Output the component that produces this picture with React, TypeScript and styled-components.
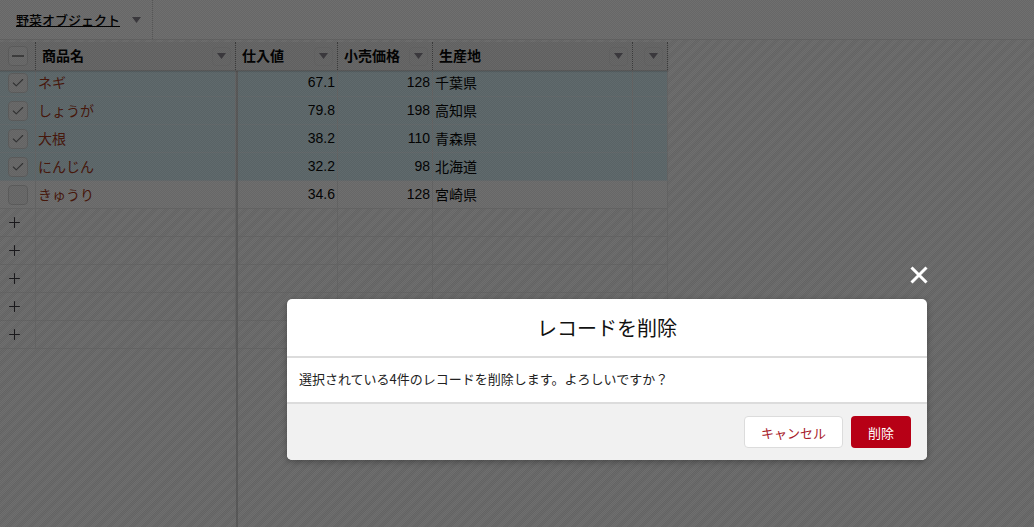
import styled, { createGlobalStyle } from 'styled-components';
import { Check, Plus } from 'lucide-react';

const rows = [
  { name: 'ネギ', cost: '67.1', price: '128', origin: '千葉県', selected: true },
  { name: 'しょうが', cost: '79.8', price: '198', origin: '高知県', selected: true },
  { name: '大根', cost: '38.2', price: '110', origin: '青森県', selected: true },
  { name: 'にんじん', cost: '32.2', price: '98', origin: '北海道', selected: true },
  { name: 'きゅうり', cost: '34.6', price: '128', origin: '宮崎県', selected: false },
];

const emptyRows = [0, 1, 2, 3, 4];

function Arrow() {
  return (
    <svg width="9" height="6" viewBox="0 0 9 6">
      <path d="M0 0h9L4.5 6z" fill="#8a8690" />
    </svg>
  );
}

function HeaderMenu() {
  return (
    <MenuButton>
      <Arrow />
    </MenuButton>
  );
}

export default function App() {
  return (
    <>
      <GlobalStyle />
      <Page>
        <TabBar>
          <Tab>
            <TabLabel>野菜オブジェクト</TabLabel>
            <Arrow />
          </Tab>
        </TabBar>

        <Grid>
          <FrozenPane>
            <HeaderRow $columns="36px 200px">
              <HeaderCell $center>
                <CheckBox>
                  <Dash />
                </CheckBox>
              </HeaderCell>
              <HeaderCell>
                <HeaderLabel>商品名</HeaderLabel>
                <HeaderMenu />
              </HeaderCell>
            </HeaderRow>
            {rows.map((row) => (
              <Row key={row.name} $columns="36px 200px" $selected={row.selected} $filled>
                <Cell $center>
                  <CheckBox>{row.selected && <Check size={14} color="#77787a" strokeWidth={2} />}</CheckBox>
                </Cell>
                <NameCell>{row.name}</NameCell>
              </Row>
            ))}
            {emptyRows.map((n) => (
              <Row key={n} $columns="36px 200px">
                <AddCell>
                  <Plus size={17} color="#3f3c42" strokeWidth={1.5} />
                </AddCell>
                <Cell />
              </Row>
            ))}
          </FrozenPane>

          <ScrollPane>
            <HeaderRow $columns="102px 95px 200px 35px">
              <HeaderCell>
                <HeaderLabel>仕入値</HeaderLabel>
                <HeaderMenu />
              </HeaderCell>
              <HeaderCell>
                <HeaderLabel>小売価格</HeaderLabel>
                <HeaderMenu />
              </HeaderCell>
              <HeaderCell>
                <HeaderLabel>生産地</HeaderLabel>
                <HeaderMenu />
              </HeaderCell>
              <HeaderCell>
                <HeaderMenu />
              </HeaderCell>
            </HeaderRow>
            {rows.map((row) => (
              <Row key={row.name} $columns="102px 95px 200px 35px" $selected={row.selected} $filled>
                <NumberCell>{row.cost}</NumberCell>
                <NumberCell>{row.price}</NumberCell>
                <OriginCell>{row.origin}</OriginCell>
                <Cell />
              </Row>
            ))}
            {emptyRows.map((n) => (
              <Row key={n} $columns="102px 95px 200px 35px">
                <Cell />
                <Cell />
                <Cell />
                <Cell />
              </Row>
            ))}
          </ScrollPane>
        </Grid>

        <Overlay>
          <DialogWrap>
            <CloseButton>
              <svg width="18" height="18" viewBox="0 0 18 18">
                <path d="M1.5 1.5l15 15M16.5 1.5l-15 15" stroke="#fff" strokeWidth="3" />
              </svg>
            </CloseButton>
            <Dialog>
              <DialogTitle>レコードを削除</DialogTitle>
              <DialogBody>選択されている4件のレコードを削除します。よろしいですか？</DialogBody>
              <DialogFooter>
                <CancelButton>キャンセル</CancelButton>
                <DeleteButton>削除</DeleteButton>
              </DialogFooter>
            </Dialog>
          </DialogWrap>
        </Overlay>
      </Page>
    </>
  );
}

const fontStack = `"Noto Sans CJK JP", "Liberation Sans", sans-serif`;

const GlobalStyle = createGlobalStyle`
  html, body {
    margin: 0;
    height: 100%;
    overflow: hidden;
  }
  body {
    font-family: "Liberation Sans", ${fontStack};
    font-size: 14px;
    color: #080808;
  }
`;

const Page = styled.div`
  position: relative;
  height: 100vh;
  display: flex;
  flex-direction: column;
  background: repeating-linear-gradient(-45deg, #fff 0 4px, #f5f5f5 4px 8px);
`;

const TabBar = styled.div`
  height: 39px;
  flex: none;
  display: flex;
  background: #fff;
  border-bottom: 1px solid #e6e6e6;
  margin-bottom: 2px;
`;

const Tab = styled.div`
  width: 153px;
  box-sizing: border-box;
  display: flex;
  align-items: center;
  gap: 12px;
  padding-left: 16px;
  border-right: 1px dotted #c8c8c8;
`;

const TabLabel = styled.span`
  font-family: ${fontStack};
  font-size: 13px;
  font-weight: 500;
  text-decoration: underline;
`;

const Grid = styled.div`
  flex: 1;
  display: flex;
  align-items: stretch;
`;

const FrozenPane = styled.div`
  position: relative;
  z-index: 1;
  width: 236px;
  border-right: 2px solid #d0d0d0;
`;

const ScrollPane = styled.div`
  width: 432px;
  margin-left: -2px;
`;

const HeaderRow = styled.div<{ $columns: string }>`
  position: relative;
  z-index: 1;
  display: grid;
  grid-template-columns: ${(p) => p.$columns};
  height: 28px;
  margin-bottom: -2px;
  border-bottom: 1px solid #d0d0d0;
  box-shadow: 0 1px 1px rgba(0, 0, 0, 0.1);
`;

const HeaderCell = styled.div<{ $center?: boolean }>`
  display: flex;
  align-items: center;
  justify-content: ${(p) => (p.$center ? 'center' : 'space-between')};
  box-sizing: border-box;
  padding: ${(p) => (p.$center ? '0' : '0 4px 0 6px')};
  background: #eeeeee;
  border-right: 1px dotted #8a8a8a;
`;

const HeaderLabel = styled.span`
  font-family: ${fontStack};
  font-size: 14px;
  font-weight: 700;
  margin-top: -2px;
`;

const MenuButton = styled.span`
  width: 19px;
  height: 19px;
  margin-left: auto;
  display: flex;
  align-items: center;
  justify-content: center;
  border: 1px solid #e6e6e6;
  border-radius: 4px;
  box-sizing: border-box;
`;

const Row = styled.div<{ $columns: string; $selected?: boolean; $filled?: boolean }>`
  display: grid;
  grid-template-columns: ${(p) => p.$columns};
  height: 28px;
  box-sizing: border-box;
  border-bottom: 1px solid ${(p) => (p.$selected ? '#e8f6fa' : '#ebebeb')};
  background: ${(p) => (p.$selected ? '#dcf4fa' : p.$filled ? '#fff' : 'transparent')};
`;

const Cell = styled.div<{ $center?: boolean }>`
  display: flex;
  align-items: center;
  justify-content: ${(p) => (p.$center ? 'center' : 'flex-start')};
  box-sizing: border-box;
  padding: ${(p) => (p.$center ? '0' : '0 3px 2px')};
  border-right: 1px solid #ebebeb;
  font-family: ${fontStack};
  font-size: 14px;
  white-space: nowrap;
`;

const AddCell = styled(Cell)`
  padding: 0 0 0 6px;
`;

const NameCell = styled(Cell)`
  color: #a83a1a;
  padding-left: 2px;
`;

const NumberCell = styled(Cell)`
  justify-content: flex-end;
  padding-right: 2px;
  font-family: "Liberation Sans", sans-serif;
`;

const OriginCell = styled(Cell)`
  padding-left: 2px;
`;

const CheckBox = styled.span`
  width: 20px;
  height: 20px;
  box-sizing: border-box;
  display: flex;
  align-items: center;
  justify-content: center;
  border: 1px solid #d8d8d8;
  border-radius: 4px;
  background: #f6f6f6;
`;

const Dash = styled.span`
  width: 12px;
  height: 2px;
  background: #8f8f8f;
`;

const Overlay = styled.div`
  position: absolute;
  inset: 0;
  z-index: 2;
  background: repeating-conic-gradient(rgba(0, 0, 0, 0.595) 0 25%, rgba(0, 0, 0, 0.565) 0 50%) 0 0 / 2px 2px;
`;

const DialogWrap = styled.div`
  position: absolute;
  left: 287px;
  top: 299px;
  width: 640px;
`;

const CloseButton = styled.span`
  position: absolute;
  right: -1px;
  top: -33px;
  display: flex;
`;

const Dialog = styled.div`
  background: #fff;
  border-radius: 5px;
  overflow: hidden;
  box-shadow: 0 2px 6px rgba(0, 0, 0, 0.3);
`;

const DialogTitle = styled.div`
  height: 57px;
  display: flex;
  align-items: center;
  justify-content: center;
  font-family: ${fontStack};
  font-size: 20px;
  border-bottom: 2px solid #dcdcdc;
  color: #111;
`;

const DialogBody = styled.div`
  height: 46px;
  box-sizing: border-box;
  display: flex;
  align-items: center;
  padding: 0 12px 4px;
  font-family: ${fontStack};
  font-size: 13px;
  border-bottom: 2px solid #dcdcdc;
  color: #222;
`;

const DialogFooter = styled.div`
  height: 56px;
  box-sizing: border-box;
  display: flex;
  align-items: center;
  justify-content: flex-end;
  gap: 8px;
  padding: 0 16px;
  background: #f1f1f1;
`;

const CancelButton = styled.span`
  width: 99px;
  height: 32px;
  box-sizing: border-box;
  display: flex;
  align-items: center;
  justify-content: center;
  background: #fff;
  border: 1px solid #dcdcdc;
  border-radius: 4px;
  color: #a8202a;
  font-family: ${fontStack};
  font-size: 13px;
`;

const DeleteButton = styled.span`
  width: 60px;
  height: 32px;
  display: flex;
  align-items: center;
  justify-content: center;
  background: #b70016;
  border-radius: 4px;
  color: #fff;
  font-family: ${fontStack};
  font-size: 13px;
`;
